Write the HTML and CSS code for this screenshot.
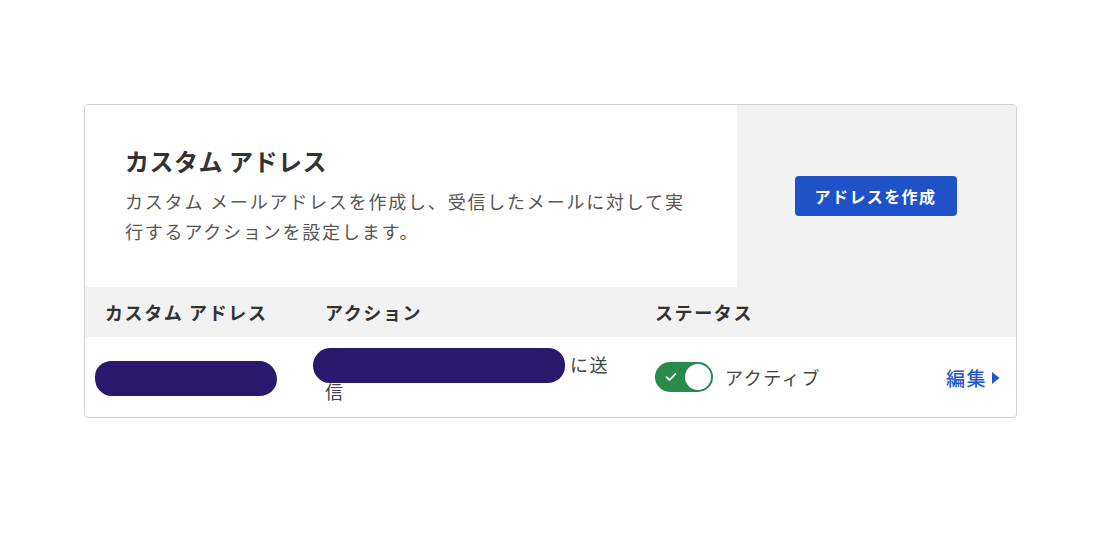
FILE: index.html
```html
<!DOCTYPE html>
<html lang="ja">
<head>
<meta charset="utf-8">
<title>カスタム アドレス</title>
<link rel="stylesheet" href="styles.css">
</head>
<body>
<div class="page">
  <section class="card">
    <div class="top">
      <div class="intro">
        <h1 class="title">カスタム アドレス</h1>
        <p class="desc">カスタム メールアドレスを作成し、受信したメールに対して実行するアクションを設定します。</p>
      </div>
      <div class="cta">
        <button class="btn" type="button">アドレスを作成</button>
      </div>
    </div>
    <div class="thead">
      <div class="th">カスタム アドレス</div>
      <div class="th">アクション</div>
      <div class="th">ステータス</div>
      <div class="th"></div>
    </div>
    <div class="row">
      <div class="cell c1"><span class="redact r1"></span></div>
      <div class="cell c2"><span class="redact r2"></span>に送信</div>
      <div class="cell c3">
        <span class="toggle">
          <svg class="check" width="12" height="10" viewBox="0 0 12 10"><path d="M1.5 5.2 L4.6 8 L10.5 1.8" fill="none" stroke="#fff" stroke-width="1.8" stroke-linecap="round" stroke-linejoin="round"/></svg>
          <span class="knob"></span>
        </span>
        <span class="status">アクティブ</span>
      </div>
      <div class="cell c4">
        <a class="edit" href="#">編集<svg class="tri" width="9" height="14" viewBox="0 0 9 14"><path d="M1 1 L8.5 7 L1 13 Z" fill="#2457cf"/></svg></a>
      </div>
    </div>
  </section>
</div>
</body>
</html>
```

FILE: styles.css
```css
html, body {
  margin: 0;
  padding: 0;
  background: #ffffff;
}
body {
  font-family: "Noto Sans CJK JP", "Noto Sans", sans-serif;
  color: #333;
}
.page {
  padding: 104px 83px 0 84px;
}
.card {
  width: 931px;
  border: 1px solid #d3d3d3;
  border-radius: 4px;
  overflow: hidden;
  background: #fff;
}
.top {
  display: flex;
  height: 182px;
}
.intro {
  width: 572px;
  padding: 40px 40px 0 40px;
  background: #fff;
}
.title {
  margin: 0;
  font-size: 24px;
  line-height: 32px;
  font-weight: 700;
  letter-spacing: 0.5px;
  color: #333;
}
.desc {
  margin: 9px 0 0 0;
  font-size: 18px;
  line-height: 30px;
  letter-spacing: 1.8px;
  color: #555;
}
.cta {
  flex: 1;
  background: #f2f2f2;
  display: flex;
  align-items: center;
  justify-content: center;
}
.btn {
  font-family: inherit;
  width: 162px;
  height: 40px;
  margin-left: -2px;
  border: none;
  border-radius: 4px;
  background: #1f52c9;
  color: #fff;
  font-size: 16px;
  font-weight: 700;
  letter-spacing: 1.4px;
  padding: 0;
}
.thead, .row {
  display: grid;
  grid-template-columns: 220px 330px 1fr auto;
  padding: 0 16px 0 20px;
  align-items: center;
}
.thead {
  height: 50px;
  background: #f2f2f2;
}
.th {
  font-size: 18px;
  font-weight: 700;
  letter-spacing: 1.6px;
  color: #333;
}
.row {
  height: 80px;
}
.cell {
  font-size: 18px;
  letter-spacing: 1.6px;
  color: #444;
}
.redact {
  display: inline-block;
  background: #2a186c;
  height: 35px;
}
.r1 {
  width: 182px;
  margin-left: -10px;
  vertical-align: middle;
  margin-top: 2px;
  border-radius: 17px 18px 18px 17px / 16px 19px 17px 18px;
}
.c2 {
  line-height: 27px;
  padding-right: 40px;
  padding-top: 2px;
}
.r2 {
  width: 252px;
  margin: -7px 5px -5px -12px;
  vertical-align: middle;
  border-radius: 18px 17px 18px 17px / 18px 17px 17px 18px;
}
.c3 {
  display: flex;
  align-items: center;
  gap: 12px;
}
.toggle {
  display: inline-flex;
  align-items: center;
  justify-content: space-between;
  width: 58px;
  height: 30px;
  box-sizing: border-box;
  padding: 0 2px 0 10px;
  border-radius: 15px;
  background: #2a8a4a;
}
.check {
  display: block;
}
.knob {
  width: 26px;
  height: 26px;
  border-radius: 50%;
  background: #fff;
}
.status {
  line-height: 28px;
}
.edit {
  display: inline-flex;
  align-items: center;
  gap: 4px;
  color: #2457cf;
  text-decoration: none;
  font-weight: 500;
  font-size: 19px;
  letter-spacing: 1.5px;
}
.tri {
  display: block;
  margin-top: 2px;
}
```
